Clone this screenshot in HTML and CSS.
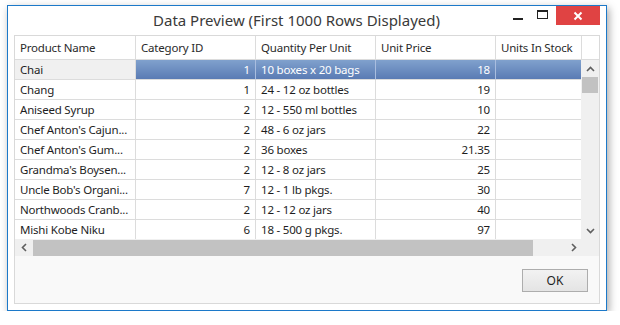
FILE: index.html
```html
<!DOCTYPE html>
<html>
<head>
<meta charset="utf-8">
<link rel="stylesheet" href="styles.css">
</head>
<body>
<div class="window">
  <div class="titlebar">
    <div class="title">Data Preview (First 1000 Rows Displayed)</div>
    <div class="controls">
      <div class="ctl ctl-min"><span class="min-bar"></span></div>
      <div class="ctl ctl-max"><span class="max-box"></span></div>
      <div class="ctl ctl-close">
        <svg width="10" height="10" viewBox="0 0 10 10"><path d="M1.5 1.5 L8.5 8.5 M8.5 1.5 L1.5 8.5" stroke="#fff" stroke-width="2"/></svg>
      </div>
    </div>
  </div>
  <div class="frame">
    <div class="gridarea">
      <div class="viewport">
        <div class="row head">
          <div class="c">Product Name</div>
          <div class="c">Category ID</div>
          <div class="c">Quantity Per Unit</div>
          <div class="c">Unit Price</div>
          <div class="c">Units In Stock</div>
        </div>
        <div class="row sel">
          <div class="c first">Chai</div>
          <div class="c num">1</div>
          <div class="c">10 boxes x 20 bags</div>
          <div class="c num">18</div>
          <div class="c"></div>
        </div>
        <div class="row">
          <div class="c">Chang</div>
          <div class="c num">1</div>
          <div class="c">24 - 12 oz bottles</div>
          <div class="c num">19</div>
          <div class="c"></div>
        </div>
        <div class="row">
          <div class="c">Aniseed Syrup</div>
          <div class="c num">2</div>
          <div class="c">12 - 550 ml bottles</div>
          <div class="c num">10</div>
          <div class="c"></div>
        </div>
        <div class="row">
          <div class="c">Chef Anton's Cajun...</div>
          <div class="c num">2</div>
          <div class="c">48 - 6 oz jars</div>
          <div class="c num">22</div>
          <div class="c"></div>
        </div>
        <div class="row">
          <div class="c">Chef Anton's Gum...</div>
          <div class="c num">2</div>
          <div class="c">36 boxes</div>
          <div class="c num">21.35</div>
          <div class="c"></div>
        </div>
        <div class="row">
          <div class="c">Grandma's Boysen...</div>
          <div class="c num">2</div>
          <div class="c">12 - 8 oz jars</div>
          <div class="c num">25</div>
          <div class="c"></div>
        </div>
        <div class="row">
          <div class="c">Uncle Bob's Organi...</div>
          <div class="c num">7</div>
          <div class="c">12 - 1 lb pkgs.</div>
          <div class="c num">30</div>
          <div class="c"></div>
        </div>
        <div class="row">
          <div class="c">Northwoods Cranb...</div>
          <div class="c num">2</div>
          <div class="c">12 - 12 oz jars</div>
          <div class="c num">40</div>
          <div class="c"></div>
        </div>
        <div class="row">
          <div class="c">Mishi Kobe Niku</div>
          <div class="c num">6</div>
          <div class="c">18 - 500 g pkgs.</div>
          <div class="c num">97</div>
          <div class="c"></div>
        </div>
      </div>
      <div class="vcol">
        <div class="vhead"></div>
        <div class="vscroll">
          <div class="sbtn"><svg width="9" height="6" viewBox="0 0 9 6"><path d="M1 5 L4.5 1.5 L8 5" fill="none" stroke="#5f5f5f" stroke-width="1.6"/></svg></div>
          <div class="vthumb"></div>
          <div class="vspace"></div>
          <div class="sbtn"><svg width="9" height="6" viewBox="0 0 9 6"><path d="M1 1 L4.5 4.5 L8 1" fill="none" stroke="#5f5f5f" stroke-width="1.6"/></svg></div>
        </div>
      </div>
      <div class="hscroll">
        <div class="hbtn hbtn-l"><svg width="6" height="9" viewBox="0 0 6 9"><path d="M5 1 L1.5 4.5 L5 8" fill="none" stroke="#5f5f5f" stroke-width="1.6"/></svg></div>
        <div class="hthumb"></div>
        <div class="hspace"></div>
        <div class="hbtn hbtn-r"><svg width="6" height="9" viewBox="0 0 6 9"><path d="M1 1 L4.5 4.5 L1 8" fill="none" stroke="#5f5f5f" stroke-width="1.6"/></svg></div>
        <div class="corner"></div>
      </div>
    </div>
    <div class="panel">
      <div class="okbtn">OK</div>
    </div>
  </div>
</div>
</body>
</html>
```
FILE: styles.css
```css
html, body {
  margin: 0;
  padding: 0;
  background: #ffffff;
}
body {
  font-family: "Segoe UI", "Noto Sans", "Open Sans", sans-serif;
  color: #1e1e1e;
}
.window {
  margin: 5px 0 0 7px;
  width: 600px;
  height: 306px;
  box-sizing: border-box;
  border: 1px solid #1c79c9;
  background: #ffffff;
  box-shadow: 2px 3px 8px rgba(0, 0, 0, 0.35);
  display: flex;
  flex-direction: column;
}
.titlebar {
  height: 29px;
  flex: none;
  display: flex;
  align-items: flex-start;
}
.title {
  flex: 1;
  padding-left: 80px;
  text-align: center;
  font-size: 15px;
  line-height: 29px;
  color: #3a3a3a;
  white-space: nowrap;
}
.controls {
  display: flex;
  margin-right: 6px;
  height: 19px;
}
.ctl {
  height: 19px;
  display: flex;
  align-items: center;
  justify-content: center;
}
.ctl-min { width: 25px; }
.ctl-max { width: 26px; }
.ctl-close {
  width: 44px;
  background: #e04343;
}
.min-bar {
  width: 10px;
  height: 2px;
  background: #222;
  margin-top: 6px;
}
.max-box {
  width: 9px;
  height: 6px;
  border: 1px solid #222;
  border-top-width: 2px;
  margin-top: -3px;
  margin-right: 2px;
}
.frame {
  margin: 0 6px;
  height: 269px;
  flex: none;
  box-sizing: border-box;
  border: 1px solid #d9d9d9;
  display: flex;
  flex-direction: column;
}
.gridarea {
  display: grid;
  grid-template-columns: 566px 18px;
  grid-template-rows: 203px 17px;
  font-size: 11.5px;
  letter-spacing: -0.2px;
}
.viewport {
  overflow: hidden;
  background: #fff;
}
.row {
  display: grid;
  grid-template-columns: 121px 120px 120px 120px 120px;
  width: 601px;
  height: 20px;
}
.row.head {
  height: 24px;
  color: #2a2a2a;
}
.c {
  box-sizing: border-box;
  border-right: 1px solid #dcdcdc;
  border-bottom: 1px solid #dcdcdc;
  padding: 0 5px;
  white-space: nowrap;
  overflow: hidden;
  line-height: 19px;
}
.head .c {
  line-height: 23px;
}
.num {
  text-align: right;
  padding-right: 5px;
}
.sel .c {
  background: linear-gradient(#80a1cd, #5a7bb4);
  color: #ffffff;
  border-right-color: #a9bddf;
}
.sel .c.first {
  background: #f0f0f0;
  color: #1e1e1e;
  border-right-color: #dcdcdc;
}
.vcol {
  display: flex;
  flex-direction: column;
}
.vhead {
  height: 24px;
  box-sizing: border-box;
  border-left: 1px solid #dcdcdc;
  border-bottom: 1px solid #dcdcdc;
  background: #fff;
  flex: none;
}
.vscroll {
  flex: 1;
  background: #f0f0f0;
  display: flex;
  flex-direction: column;
}
.sbtn {
  height: 17px;
  flex: none;
  display: flex;
  align-items: center;
  justify-content: center;
}
.vthumb {
  height: 16px;
  margin: 0 1px;
  background: #c2c2c2;
  flex: none;
}
.vspace { flex: 1; }
.hscroll {
  grid-column: 1 / 3;
  display: flex;
  background: #f0f0f0;
}
.hbtn {
  display: flex;
  align-items: center;
  justify-content: center;
  flex: none;
}
.hbtn-l { width: 18px; }
.hbtn-r { width: 17px; }
.hthumb {
  width: 500px;
  margin: 1px 0 0;
  background: #c2c2c2;
  flex: none;
}
.hspace { flex: 1; }
.corner { width: 17px; flex: none; }
.panel {
  flex: 1;
  background: #f9f9f9;
  display: flex;
  justify-content: flex-end;
  align-items: flex-start;
  padding: 13px 11px 0 0;
}
.okbtn {
  width: 66px;
  height: 23px;
  box-sizing: border-box;
  border: 1px solid #adadad;
  background: linear-gradient(#f2f2f2, #e4e4e4);
  font-size: 12px;
  line-height: 21px;
  text-align: center;
  color: #1e1e1e;
}
```
